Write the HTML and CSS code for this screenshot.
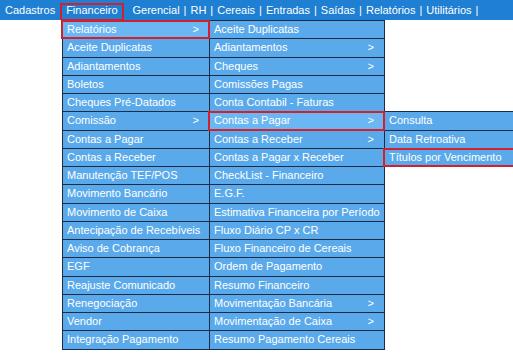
FILE: index.html
```html
<!DOCTYPE html>
<html lang="pt-BR">
<head>
  <meta charset="UTF-8" />
  <title>Menu Financeiro</title>
  <link rel="stylesheet" href="styles.css">
</head>
<body>

  <nav class="topbar">
    <span class="top-item">Cadastros</span>
    <span class="top-item active">Financeiro</span>
    <span class="top-item">Gerencial</span><span class="sep">|</span>
    <span class="top-item">RH</span><span class="sep">|</span>
    <span class="top-item">Cereais</span><span class="sep">|</span>
    <span class="top-item">Entradas</span><span class="sep">|</span>
    <span class="top-item">Saídas</span><span class="sep">|</span>
    <span class="top-item">Relatórios</span><span class="sep">|</span>
    <span class="top-item">Utilitários</span><span class="sep">|</span>
  </nav>

  <div class="dropdown">
    <ul class="menu col1">
      <li class="sub hover mark">Relatórios</li>
      <li>Aceite Duplicatas</li>
      <li>Adiantamentos</li>
      <li>Boletos</li>
      <li>Cheques Pré-Datados</li>
      <li class="sub">Comissão</li>
      <li>Contas a Pagar</li>
      <li>Contas a Receber</li>
      <li>Manutenção TEF/POS</li>
      <li>Movimento Bancário</li>
      <li>Movimento de Caixa</li>
      <li>Antecipação de Recebíveis</li>
      <li>Aviso de Cobrança</li>
      <li>EGF</li>
      <li>Reajuste Comunicado</li>
      <li>Renegociação</li>
      <li>Vendor</li>
      <li>Integração Pagamento</li>
    </ul>

    <ul class="menu col2">
      <li>Aceite Duplicatas</li>
      <li class="sub">Adiantamentos</li>
      <li class="sub">Cheques</li>
      <li>Comissões Pagas</li>
      <li>Conta Contabil - Faturas</li>
      <li class="sub hover mark">Contas a Pagar</li>
      <li class="sub">Contas a Receber</li>
      <li>Contas a Pagar x Receber</li>
      <li>CheckList - Financeiro</li>
      <li>E.G.F.</li>
      <li>Estimativa Financeira por Período</li>
      <li>Fluxo Diário CP x CR</li>
      <li>Fluxo Financeiro de Cereais</li>
      <li>Ordem de Pagamento</li>
      <li>Resumo Financeiro</li>
      <li class="sub">Movimentação Bancária</li>
      <li class="sub">Movimentação de Caixa</li>
      <li>Resumo Pagamento Cereais</li>
    </ul>

    <ul class="menu col3">
      <li>Consulta</li>
      <li>Data Retroativa</li>
      <li class="mark">Títulos por Vencimento</li>
    </ul>
  </div>

</body>
</html>
```

FILE: styles.css
```css
:root {
  --bar: #1f7fd3;
  --item: #5aaaeb;
  --item-hover: #6bb7f4;
  --line: #1d2c46;
  --mark: #d41f2d;
  --row: 17.25px;
}

body {
  margin: 0;
  background: #fff;
  font-family: 'Liberation Sans', Arial, sans-serif;
  font-size: 11px;
  color: #fff;
}

.topbar {
  display: flex;
  align-items: center;
  height: 20px;
  padding-left: 5px;
  background: var(--bar);
  white-space: nowrap;
}

.top-item {
  position: relative;
  line-height: 20px;
}

.top-item.active {
  margin: 0 9px 0 5px;
  padding: 0 6px;
}

.top-item.active::after {
  content: "";
  position: absolute;
  top: 3px;
  bottom: -1px;
  left: 0;
  right: 0;
  border: 2px solid var(--mark);
  z-index: 3;
}

.sep {
  margin: 0 4px;
}

.dropdown {
  position: absolute;
  top: 20px;
  left: 62px;
  display: flex;
  align-items: flex-start;
}

.menu {
  list-style: none;
  margin: 0;
  padding: 0;
  border: 1px solid var(--line);
  background: var(--item);
}

.col1 {
  width: 146px;
}

.col2 {
  width: 174px;
  margin-left: -1px;
}

.col3 {
  width: 132px;
  margin-left: -1px;
  margin-top: calc(5 * (var(--row) + 1px));
}

.menu li {
  position: relative;
  height: var(--row);
  line-height: var(--row);
  padding-left: 4px;
  border-bottom: 1px solid var(--line);
  white-space: nowrap;
}

.menu li:last-child {
  border-bottom: none;
}

.menu li.hover {
  background: var(--item-hover);
}

.menu li.sub::before {
  content: ">";
  position: absolute;
  right: 10px;
  top: 0;
}

.mark::after {
  content: "";
  position: absolute;
  top: -1px;
  left: -2px;
  right: -1px;
  bottom: -1px;
  border: 2px solid var(--mark);
  z-index: 3;
}
```
